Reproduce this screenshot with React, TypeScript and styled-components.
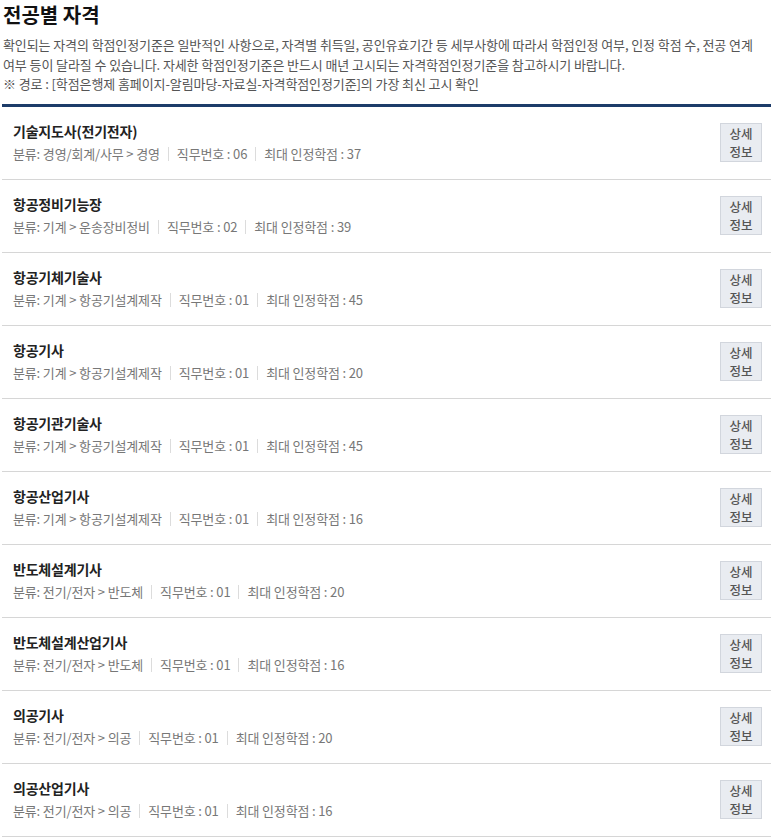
import React from "react";
import styled, { createGlobalStyle } from "styled-components";

const Global = createGlobalStyle`
  html, body { margin: 0; padding: 0; background: #fff; }
  body { font-family: "Noto Sans CJK KR", "Noto Sans", sans-serif; color: #222; }
`;

const Page = styled.div`
  padding: 0 2px 0 2px;
  width: 769px;
`;

const Title = styled.h2`
  margin: 0;
  padding: 1px 0 0 1px;
  font-size: 20px;
  font-weight: 700;
  line-height: 28px;
  color: #111;
`;

const Intro = styled.div`
  margin-top: 6px;
  padding-left: 1px;
  font-size: 13px;
  line-height: 19.5px;
  color: #555;
  letter-spacing: -0.1px;
`;

const IntroLine = styled.p`
  margin: 0;
  white-space: nowrap;
`;

const List = styled.ul`
  list-style: none;
  margin: 10px 0 0 0;
  padding: 0;
  border-top: 3px solid #1d3c69;
`;

const Row = styled.li`
  display: flex;
  align-items: center;
  justify-content: space-between;
  height: 72px;
  padding: 0 9px 0 11px;
  border-bottom: 1px solid #d6d6d6;
`;

const Info = styled.div`
  display: flex;
  flex-direction: column;
  gap: 3px;
`;

const Name = styled.strong`
  font-size: 14px;
  font-weight: 700;
  line-height: 20px;
  color: #222;
  letter-spacing: -0.2px;
`;

const Meta = styled.div`
  display: flex;
  align-items: center;
  font-size: 13px;
  line-height: 20px;
  color: #777;
  letter-spacing: -0.15px;
`;

const MetaItem = styled.span`
  display: inline-flex;
  align-items: center;
  & + &::before {
    content: "";
    display: inline-block;
    width: 1px;
    height: 14px;
    background: #dcdcdc;
    margin: 0 8px;
  }
`;

const DetailButton = styled.button`
  display: flex;
  flex-direction: column;
  align-items: center;
  justify-content: center;
  width: 42px;
  height: 39px;
  padding: 0;
  border: 1px solid #d2d6dd;
  background: #e9ecf1;
  color: #555;
  font-family: "Noto Sans CJK KR", "Noto Sans", sans-serif;
  font-size: 12.5px;
  font-weight: 500;
  line-height: 18px;
  cursor: pointer;
`;

const ButtonLine = styled.span`
  display: block;
`;

type Item = { name: string; cat: string; no: string; credit: number };

const items: Item[] = [
  { name: "기술지도사(전기전자)", cat: "경영/회계/사무 > 경영", no: "06", credit: 37 },
  { name: "항공정비기능장", cat: "기계 > 운송장비정비", no: "02", credit: 39 },
  { name: "항공기체기술사", cat: "기계 > 항공기설계제작", no: "01", credit: 45 },
  { name: "항공기사", cat: "기계 > 항공기설계제작", no: "01", credit: 20 },
  { name: "항공기관기술사", cat: "기계 > 항공기설계제작", no: "01", credit: 45 },
  { name: "항공산업기사", cat: "기계 > 항공기설계제작", no: "01", credit: 16 },
  { name: "반도체설계기사", cat: "전기/전자 > 반도체", no: "01", credit: 20 },
  { name: "반도체설계산업기사", cat: "전기/전자 > 반도체", no: "01", credit: 16 },
  { name: "의공기사", cat: "전기/전자 > 의공", no: "01", credit: 20 },
  { name: "의공산업기사", cat: "전기/전자 > 의공", no: "01", credit: 16 },
];

export default function App() {
  return (
    <Page>
      <Global />
      <Title>전공별 자격</Title>
      <Intro>
        <IntroLine>
          확인되는 자격의 학점인정기준은 일반적인 사항으로, 자격별 취득일, 공인유효기간 등 세부사항에 따라서 학점인정 여부, 인정 학점 수, 전공 연계
        </IntroLine>
        <IntroLine>
          여부 등이 달라질 수 있습니다. 자세한 학점인정기준은 반드시 매년 고시되는 자격학점인정기준을 참고하시기 바랍니다.
        </IntroLine>
        <IntroLine>※ 경로 : [학점은행제 홈페이지-알림마당-자료실-자격학점인정기준]의 가장 최신 고시 확인</IntroLine>
      </Intro>
      <List>
        {items.map((it) => (
          <Row key={it.name}>
            <Info>
              <Name>{it.name}</Name>
              <Meta>
                <MetaItem>분류: {it.cat}</MetaItem>
                <MetaItem>직무번호 : {it.no}</MetaItem>
                <MetaItem>최대 인정학점 : {it.credit}</MetaItem>
              </Meta>
            </Info>
            <DetailButton>
              <ButtonLine>상세</ButtonLine>
              <ButtonLine>정보</ButtonLine>
            </DetailButton>
          </Row>
        ))}
      </List>
    </Page>
  );
}
